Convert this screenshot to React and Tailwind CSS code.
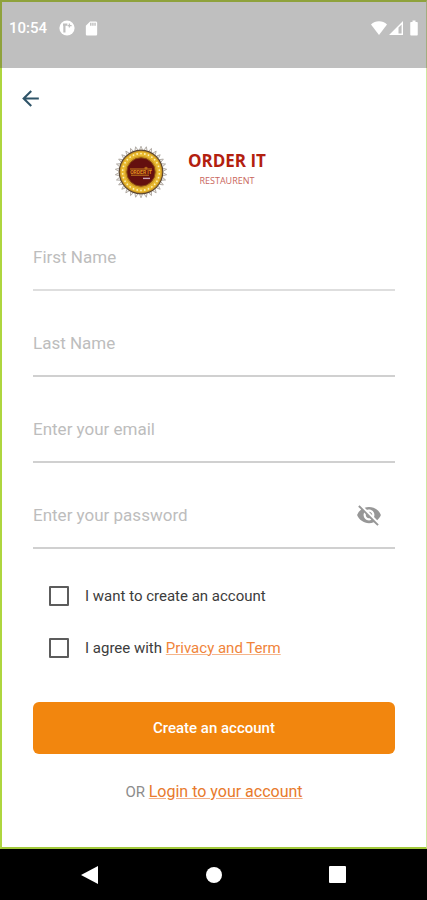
import { useState } from 'react'
import { MdArrowBack, MdBatteryFull, MdSdCard, MdVisibility, MdVisibilityOff } from 'react-icons/md'

const FIELDS = [
  { name: 'firstName', label: 'First Name', type: 'text', line: 'border-[#dedede]' },
  { name: 'lastName', label: 'Last Name', type: 'text', line: 'border-[#d0d0d0]' },
  { name: 'email', label: 'Enter your email', type: 'email', line: 'border-[#d0d0d0]' },
  { name: 'password', label: 'Enter your password', type: 'password', line: 'border-[#d0d0d0]' },
]

const TEETH = Array.from({ length: 30 }, (_, i) => i * 12)
const BEADS = Array.from({ length: 30 }, (_, i) => i * 12)

function StatusBar() {
  return (
    <header className="flex h-[68px] items-start justify-between border-t-2 border-r border-l-2 border-t-[#8fa23c] border-r-[#a3ad80] border-l-[#8fa23c] bg-[#bfbfbf] pt-4 pr-[3px] pl-[7px] text-white">
      <div className="flex h-5 items-center">
        <span className="w-[50px] text-[15px] font-medium">10:54</span>
        <svg viewBox="0 0 16 16" className="h-4 w-4" aria-hidden="true">
          <circle cx="8" cy="8" r="7.6" fill="#fff" />
          <path d="M5.4 12.4V4.2M4 4.6h4.4" fill="none" stroke="#bfbfbf" strokeWidth="2.2" />
          <path d="M10.4 3.6v4M8.6 5.6h4" fill="none" stroke="#bfbfbf" strokeWidth="1.3" />
        </svg>
        <MdSdCard className="ml-2 h-[17px] w-[17px]" />
      </div>
      <div className="flex h-5 items-center">
        <svg viewBox="0 0 16 14" className="h-[14px] w-4" aria-hidden="true">
          <path d="M0 3.4C2.2 1.3 4.9.2 8 .2s5.8 1.1 8 3.2L8 14z" fill="#fff" />
        </svg>
        <svg viewBox="0 0 14 14" className="ml-[2px] h-[14px] w-[14px]" aria-hidden="true">
          <path d="M0 14 14 0v14zm9.5-1.4h3.1V3.4L9.5 6.5z" fill="#fff" fillRule="evenodd" />
        </svg>
        <MdBatteryFull className="ml-[2px] h-[18px] w-[18px]" />
      </div>
    </header>
  )
}

function Seal() {
  return (
    <svg viewBox="0 0 54 54" className="h-[54px] w-[54px]" aria-hidden="true">
      {TEETH.map(a => (
        <path
          key={a}
          d="M25.6 4.6 27 1.2l1.4 3.4"
          fill="#f1efec"
          stroke="#a8a29b"
          strokeWidth="0.8"
          transform={`rotate(${a} 27 27)`}
        />
      ))}
      <circle cx="27" cy="27" r="22.4" fill="#5b4631" />
      <circle cx="27" cy="27" r="21.2" fill="#cf9a22" />
      <circle cx="27" cy="27" r="18" fill="none" stroke="#e8b92f" strokeWidth="4" />
      {BEADS.map(a => (
        <circle key={a} cx="27" cy="8.6" r="0.9" fill="#fdf0b4" transform={`rotate(${a} 27 27)`} />
      ))}
      <circle cx="27" cy="27" r="14.2" fill="#64100f" stroke="#8a4a12" strokeWidth="1" />
      <text x="27" y="28.8" textAnchor="middle" fontSize="5" fontWeight="700" fill="#e0921e">ORDER IT</text>
      <path d="M16 24h22M17 30.2h18M32 24.6v-2.8M30.4 23h3.2" stroke="#c97f1c" strokeWidth="1" />
      <path d="M29 33.4h7" stroke="#c9a3b4" strokeWidth="1.4" />
    </svg>
  )
}

function Field({ field, value, onChange }) {
  const [visible, setVisible] = useState(false)
  const isPassword = field.type === 'password'
  const Icon = visible ? MdVisibility : MdVisibilityOff

  return (
    <div className={`mt-5 flex h-[66px] items-center border-b-2 ${field.line}`}>
      <input
        name={field.name}
        type={isPassword && visible ? 'text' : field.type}
        value={value}
        onChange={onChange}
        aria-label={field.label}
        placeholder={field.label}
        className="h-full min-w-0 flex-1 text-[17px] text-[#333] outline-none placeholder:text-[#bdbdbd]"
      />
      {isPassword && (
        <button
          type="button"
          aria-label="Show password"
          onClick={() => setVisible(!visible)}
          className="mr-[13px] text-[#979797]"
        >
          <Icon className="h-[26px] w-[26px]" />
        </button>
      )}
    </div>
  )
}

function Check({ id, children }) {
  return (
    <div className="flex h-[52px] items-center gap-4 pl-4">
      <input
        id={id}
        type="checkbox"
        className="h-5 w-5 shrink-0 appearance-none rounded-[1px] border-2 border-[#5c5c5c] checked:bg-[#f3870f]"
      />
      <label htmlFor={id} className="text-[15px] text-[#3c3c3c]">{children}</label>
    </div>
  )
}

function NavBar() {
  return (
    <nav className="flex h-[51px] items-center justify-around bg-black px-7 text-white">
      <button type="button" aria-label="Back">
        <svg viewBox="0 0 18 20" className="h-5 w-[18px]"><path d="M0 10 17 1v18z" fill="#fff" /></svg>
      </button>
      <button type="button" aria-label="Home" className="h-4 w-4 rounded-full bg-white" />
      <button type="button" aria-label="Recent apps" className="h-[17px] w-[17px] rounded-[1px] bg-white" />
    </nav>
  )
}

export default function App() {
  const [form, setForm] = useState({ firstName: '', lastName: '', email: '', password: '' })

  const handleChange = e => setForm(f => ({ ...f, [e.target.name]: e.target.value }))

  return (
    <div className="flex min-h-screen flex-col bg-white font-['Roboto',sans-serif]">
      <StatusBar />

      <main className="flex-1 border-r border-b-2 border-l-2 border-r-[#cfe8a0] border-b-[#a2c93a] border-l-[#aed63f] px-[31px]">
        <button type="button" aria-label="Go back" className="mt-[18px] -ml-[15px] block text-[#2f5468]">
          <MdArrowBack className="h-[25px] w-[25px]" />
        </button>

        {/* Brand */}
        <div className="mt-[34px] flex h-[54px] justify-center gap-5 pr-12">
          <Seal />
          <div className="pt-[6px] text-center font-['Open_Sans',sans-serif]">
            <h1 className="text-[17px] leading-5 font-bold text-[#b3200f]">ORDER IT</h1>
            <p className="text-[9px] leading-5 text-[#c9655c]">RESTAURENT</p>
          </div>
        </div>

        <form onSubmit={e => e.preventDefault()} className="pt-[6px]">
          {FIELDS.map(f => (
            <Field key={f.name} field={f} value={form[f.name]} onChange={handleChange} />
          ))}

          <div className="mt-[21px]">
            <Check id="create">I want to create an account</Check>
            <Check id="agree">
              I agree with <a href="#terms" className="text-[#f0843a] underline decoration-[#f6b58a]">Privacy and Term</a>
            </Check>
          </div>

          <button type="submit" className="mt-7 h-[52px] w-full rounded-md bg-[#f2860e] text-[15px] font-medium text-white">
            Create an account
          </button>
        </form>

        <p className="mt-[26px] text-center text-[15px] text-[#8c8c8c]">
          OR <a href="#login" className="text-base text-[#e87a2c] underline decoration-[#f3b08a]">Login to your account</a>
        </p>
      </main>

      <NavBar />
    </div>
  )
}
